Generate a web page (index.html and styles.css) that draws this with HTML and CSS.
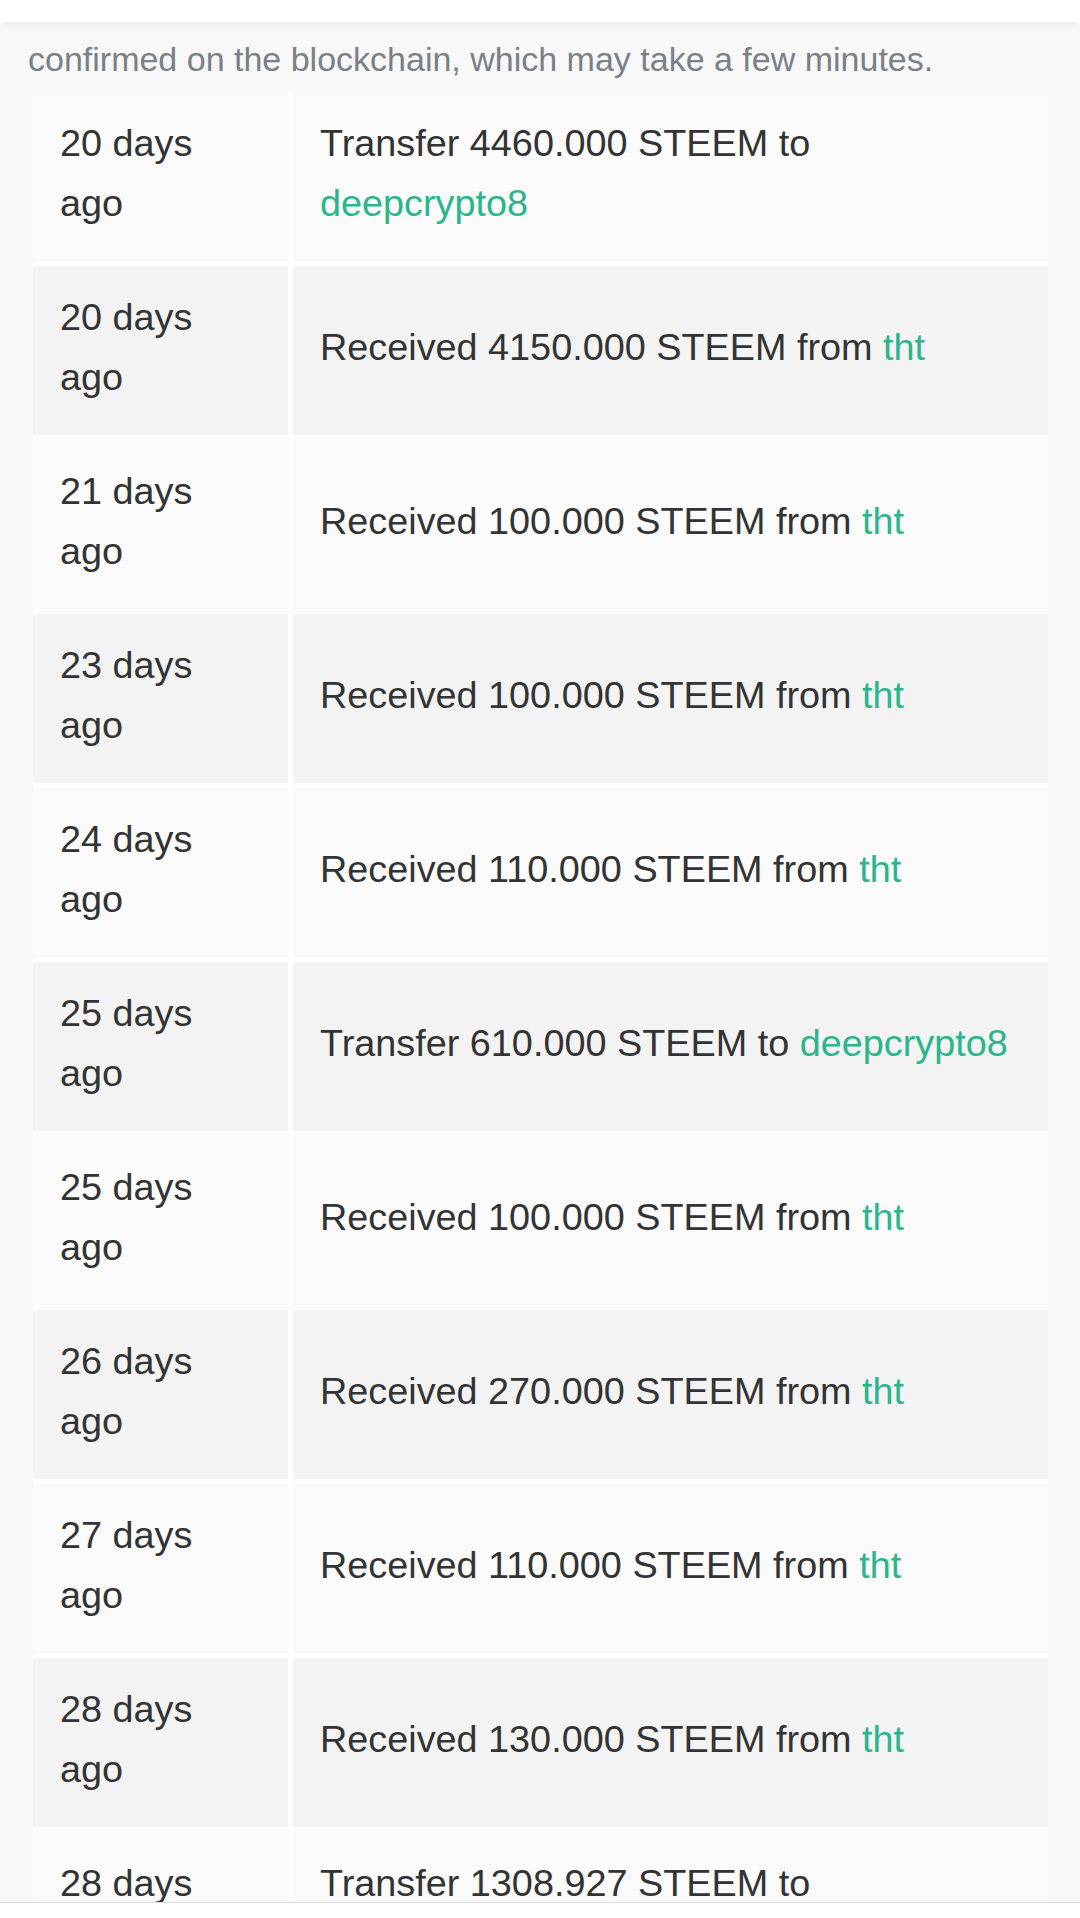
FILE: index.html
```html
<!DOCTYPE html>
<html lang="en">
<head>
    <meta charset="UTF-8">
    <meta name="viewport" content="width=device-width, initial-scale=1.0">
    <title>Wallet History</title>
    <link rel="stylesheet" href="styles.css">
</head>
<body>
    <div class="topBar"></div>

    <div class="pageContent">
        <p class="notice">confirmed on the blockchain, which may take a few minutes.</p>

        <div class="history">
            <div class="cell when"><span>20 days ago</span></div>
            <div class="cell what"><span>Transfer 4460.000 STEEM to <a href="#">deepcrypto8</a></span></div>

            <div class="cell when dark"><span>20 days ago</span></div>
            <div class="cell what dark"><span>Received 4150.000 STEEM from <a href="#">tht</a></span></div>

            <div class="cell when"><span>21 days ago</span></div>
            <div class="cell what"><span>Received 100.000 STEEM from <a href="#">tht</a></span></div>

            <div class="cell when dark"><span>23 days ago</span></div>
            <div class="cell what dark"><span>Received 100.000 STEEM from <a href="#">tht</a></span></div>

            <div class="cell when"><span>24 days ago</span></div>
            <div class="cell what"><span>Received 110.000 STEEM from <a href="#">tht</a></span></div>

            <div class="cell when dark"><span>25 days ago</span></div>
            <div class="cell what dark"><span>Transfer 610.000 STEEM to <a href="#">deepcrypto8</a></span></div>

            <div class="cell when"><span>25 days ago</span></div>
            <div class="cell what"><span>Received 100.000 STEEM from <a href="#">tht</a></span></div>

            <div class="cell when dark"><span>26 days ago</span></div>
            <div class="cell what dark"><span>Received 270.000 STEEM from <a href="#">tht</a></span></div>

            <div class="cell when"><span>27 days ago</span></div>
            <div class="cell what"><span>Received 110.000 STEEM from <a href="#">tht</a></span></div>

            <div class="cell when dark"><span>28 days ago</span></div>
            <div class="cell what dark"><span>Received 130.000 STEEM from <a href="#">tht</a></span></div>

            <div class="cell when"><span>28 days ago</span></div>
            <div class="cell what"><span>Transfer 1308.927 STEEM to <a href="#">deepcrypto8</a></span></div>
        </div>
    </div>

    <div class="bottomBar"></div>
</body>
</html>
```

FILE: styles.css
```css
* {
    font-family: "Liberation Sans", Arial, sans-serif;
}
html, body {
    height: 100%;
    overflow: hidden;
}
body {
    margin: 0;
    background-color: #f8f8f8;
    color: #333333;
}
.topBar {
    position: fixed;
    top: 0;
    left: 0;
    right: 0;
    height: 22px;
    background-color: #ffffff;
    box-shadow: 0 2px 10px rgba(0, 0, 0, 0.07);
    z-index: 2;
}
.bottomBar {
    position: fixed;
    bottom: 0;
    left: 0;
    right: 0;
    height: 15px;
    background-color: #ffffff;
    border-top: 1px solid #dcdcdc;
    z-index: 2;
}
.pageContent {
    padding: 0 32px 0 28px;
}
.notice {
    margin: 37px 0 11px 0;
    font-size: 34px;
    line-height: 44px;
    color: #788187;
    white-space: nowrap;
}
.history {
    display: grid;
    grid-template-columns: 255px 1fr;
    gap: 5px;
    margin-left: 5px;
    background-color: #fdfdfd;
}
.cell {
    display: flex;
    align-items: center;
    padding: 21px 27px 28px 27px;
    font-size: 37.8px;
    line-height: 60px;
    background-color: #fafafa;
}
.cell.dark {
    background-color: #f3f3f3;
}
.what a {
    color: #2bb58c;
    text-decoration: none;
}
```
